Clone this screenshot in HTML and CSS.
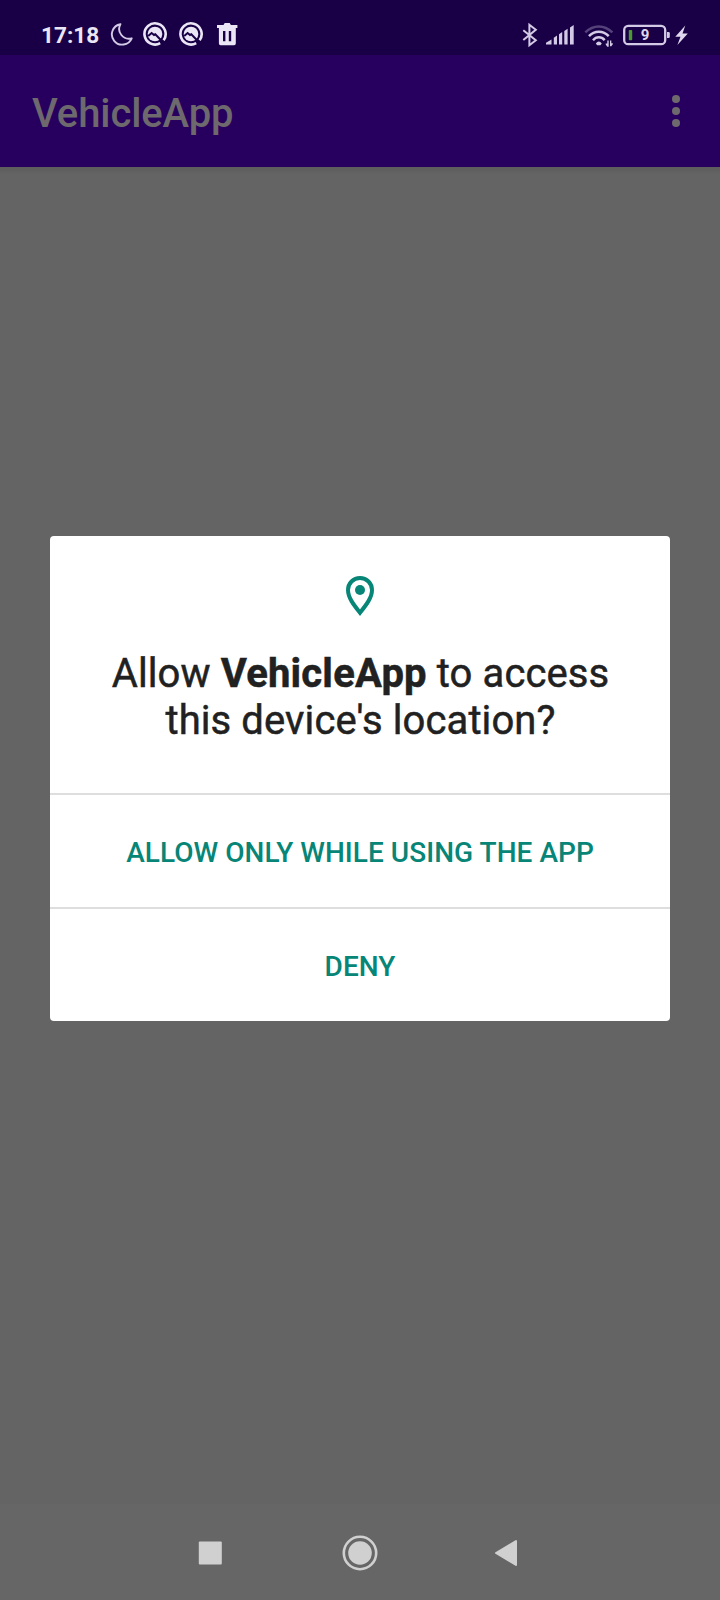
FILE: index.html
```html
<!DOCTYPE html>
<html lang="en">
<head>
<meta charset="utf-8">
<title>VehicleApp</title>
<link rel="stylesheet" href="styles.css">
</head>
<body>
<div class="screen">
  <header class="status">
    <div class="status-left">
      <span class="clock">17:18</span>
      <svg class="moon" width="24" height="26" viewBox="110 21 24 26"><path d="M120.400 24.200A10.300 10.300 0 1 0 131.700 38.300A9.800 9.800 0 0 1 120.400 24.200Z" fill="none" stroke="#d3cae5" stroke-width="1.900" stroke-linejoin="round"/></svg>
      <svg class="quick" width="26" height="26" viewBox="0 0 26 26"><use href="#q"/></svg>
      <svg class="quick second" width="26" height="26" viewBox="0 0 26 26"><use href="#q"/></svg>
      <svg class="trash" width="22" height="26" viewBox="216 21 22 26"><path fill="#ebe6f5" fill-rule="evenodd" d="M217 25h6.500l1.200-2h5l1.200 2h6.500v3h-1.600v15.500q0 1.700-1.700 1.700h-13.500q-1.700 0-1.700-1.700v-15.500h-1.900zM223 31v10.200h2.400v-10.200zM228.800 31v10.200h2.400v-10.200z"/></svg>
    </div>
    <div class="status-right">
      <svg class="bluetooth" width="16" height="26" viewBox="522 22 16 26"><path d="M523.300 30.200L535.800 40.300L529.400 45.200V24.800L535.800 29.700L523.300 40" fill="none" stroke="#d3cae5" stroke-width="2"/></svg>
      <svg class="signal" width="30" height="26" viewBox="545 22 30 26"><path fill="#d3cae5" d="M546 44.400v-1.600l5.500-3.400v5zM553.800 44.400v-6.700l3.200-2.200v8.900zM559 44.400v-10.200l3.200-2.200v12.400zM564.300 44.400v-13.500l3.300-2.200v15.700zM570 44.400v-16.900l3.700-2.500v19.400z"/></svg>
      <svg class="wifi" width="30" height="26" viewBox="584 22 30 26"><g fill="none" stroke="#d3cae5" stroke-width="2.500"><path stroke="#55427a" d="M585.300 32.300Q591.500 26.400 598.800 26.400T612.400 32.300"/><path d="M589 36.100Q593 31.800 598.800 31.800T608.700 36.100"/><path d="M593 40.200Q595.500 37.300 598.800 37.300T604.700 40.200"/></g><path fill="#d3cae5" d="M595.800 43.500Q598.800 39.700 601.800 43.500L600.400 45.200H597.200zM607.300 40.500h1.400v6.300h-1.400l-1.600-2.300v-1h1.600zM610 40.500h1.300v2.800h1.500v1l-1.500 1.900h-1.300z"/></svg>
      <svg class="battery" width="48" height="26" viewBox="623 22 48 26"><rect x="624.200" y="25.900" width="41" height="18.300" rx="4" fill="none" stroke="#d3cae5" stroke-width="2.300"/><path fill="#d3cae5" d="M667 32h1.500q1.300 0 1.300 1.300v3.400q0 1.300-1.300 1.300h-1.500z"/><rect x="628.800" y="30" width="3.400" height="10.300" rx=".8" fill="#4b9a2f"/><text class="battery-level" x="645" y="40.300">9</text></svg>
      <svg class="bolt" width="14" height="26" viewBox="675 22 14 26"><path fill="#e0d8ee" d="M685.300 25.600L675.300 36.700H680.500L677.400 45L687.800 33.600H682.500Z"/></svg>
    </div>
  </header>
  <div class="appbar">
    <h1 class="app-title">VehicleApp</h1>
    <svg class="more" width="8" height="32" viewBox="0 0 8 32"><g fill="#6d696d"><circle cx="4" cy="4" r="4"/><circle cx="4" cy="16" r="4"/><circle cx="4" cy="28" r="4"/></g></svg>
  </div>
  <main class="content">
    <section class="dialog" role="dialog">
      <div class="message">
        <svg class="pin" width="28" height="40" viewBox="0 0 28 40"><path d="M14 2C7.300 2 2 7.300 2 14C2 21.500 7.500 28.600 14 36.700C20.500 28.600 26 21.500 26 14C26 7.300 20.700 2 14 2Z" fill="none" stroke="#078576" stroke-width="4"/><circle cx="14" cy="14" r="5" fill="#078576"/></svg>
        <p class="question">Allow <b>VehicleApp</b> to access<br>this device's location?</p>
      </div>
      <button class="action">ALLOW ONLY WHILE USING THE APP</button>
      <button class="action">DENY</button>
    </section>
  </main>
  <nav class="nav">
    <svg width="24" height="36" viewBox="0 0 24 36"><rect x=".8" y="6.500" width="23" height="23" rx="1" fill="#d0d0d0"/></svg>
    <svg class="home" width="36" height="36" viewBox="0 0 36 36"><circle cx="18" cy="18" r="16.200" fill="none" stroke="#d0d0d0" stroke-width="2.600"/><circle cx="18" cy="18" r="11.800" fill="#d0d0d0"/></svg>
    <svg class="back" width="24" height="36" viewBox="0 0 24 36"><path d="M2 18L22 6V30Z" fill="#d0d0d0" stroke="#d0d0d0" stroke-width="2" stroke-linejoin="round"/></svg>
  </nav>
</div>
<svg class="defs" width="0" height="0"><defs><g id="q"><path d="M18.200 22.200A10.600 10.600 0 1 1 21.600 19.200" fill="none" stroke="#ebe6f5" stroke-width="2.600"/><circle cx="13" cy="13" r="7.300" fill="#ebe6f5"/><path d="M6.200 15L9.600 12L12 14L13.300 13.300L20.500 20.800" fill="none" stroke="#190046" stroke-width="2"/></g></defs></svg>
</body>
</html>
```
FILE: styles.css
```css
* { box-sizing: border-box; }
body { margin: 0; font-family: Roboto, "Liberation Sans", sans-serif; }
svg { display: block; flex: none; }
.defs { position: absolute; }
.screen { width: 720px; height: 1600px; display: flex; flex-direction: column; background: #646464; overflow: hidden; }
.status { height: 55px; flex: none; display: flex; justify-content: space-between; padding: 0 31px 0 41px; background: #190046; }
.status-left, .status-right { display: flex; align-items: flex-start; }
.status-left { padding-top: 21px; }
.status-right { padding-top: 22px; }
.clock { width: 69px; padding-top: 1px; font-size: 22.600px; line-height: 28px; font-weight: 700; color: #ebe6f5; }
.quick { margin-left: 8px; }
.second { margin-left: 10px; }
.trash { margin-left: 12px; }
.signal { margin-left: 7px; }
.wifi { margin-left: 9px; }
.battery { margin-left: 9px; }
.bolt { margin-left: 4px; }
.battery-level { font-size: 15px; font-weight: 700; fill: #e0d8ee; text-anchor: middle; }
.appbar { height: 112px; flex: none; display: flex; align-items: center; justify-content: space-between; padding: 0 40px 0 32px; background: #27005f; }
.app-title { margin: 5px 0 0; font-size: 40px; line-height: 48px; font-weight: 500; letter-spacing: -.1px; color: #6d696d; }
.content { flex: 1; padding: 369px 50px 0; background: linear-gradient(#5c5c5c, #646464 8px); }
.dialog { height: 485px; display: flex; flex-direction: column; border-radius: 4px; overflow: hidden; background: #fff; }
.message { height: 257px; flex: none; padding-top: 40px; display: flex; flex-direction: column; align-items: center; color: #212121; }
.question { margin: 34px 0 0 1px; font-size: 40px; line-height: 47px; font-weight: 400; letter-spacing: .1px; text-align: center; white-space: nowrap; -webkit-text-stroke: .5px #212121; }
.question b { font-weight: 700; letter-spacing: .2px; }
.action { flex: 1; border: 0; border-top: 2px solid #dedede; padding: 4px 0 0; background: none; font: 500 28px/34px Roboto, "Liberation Sans", sans-serif; letter-spacing: .04px; color: #078576; }
.nav { height: 96px; flex: none; display: flex; align-items: center; padding: 1px 0 0 198px; background: #666; }
.home { margin-left: 119.500px; }
.back { margin-left: 116.300px; }
```
